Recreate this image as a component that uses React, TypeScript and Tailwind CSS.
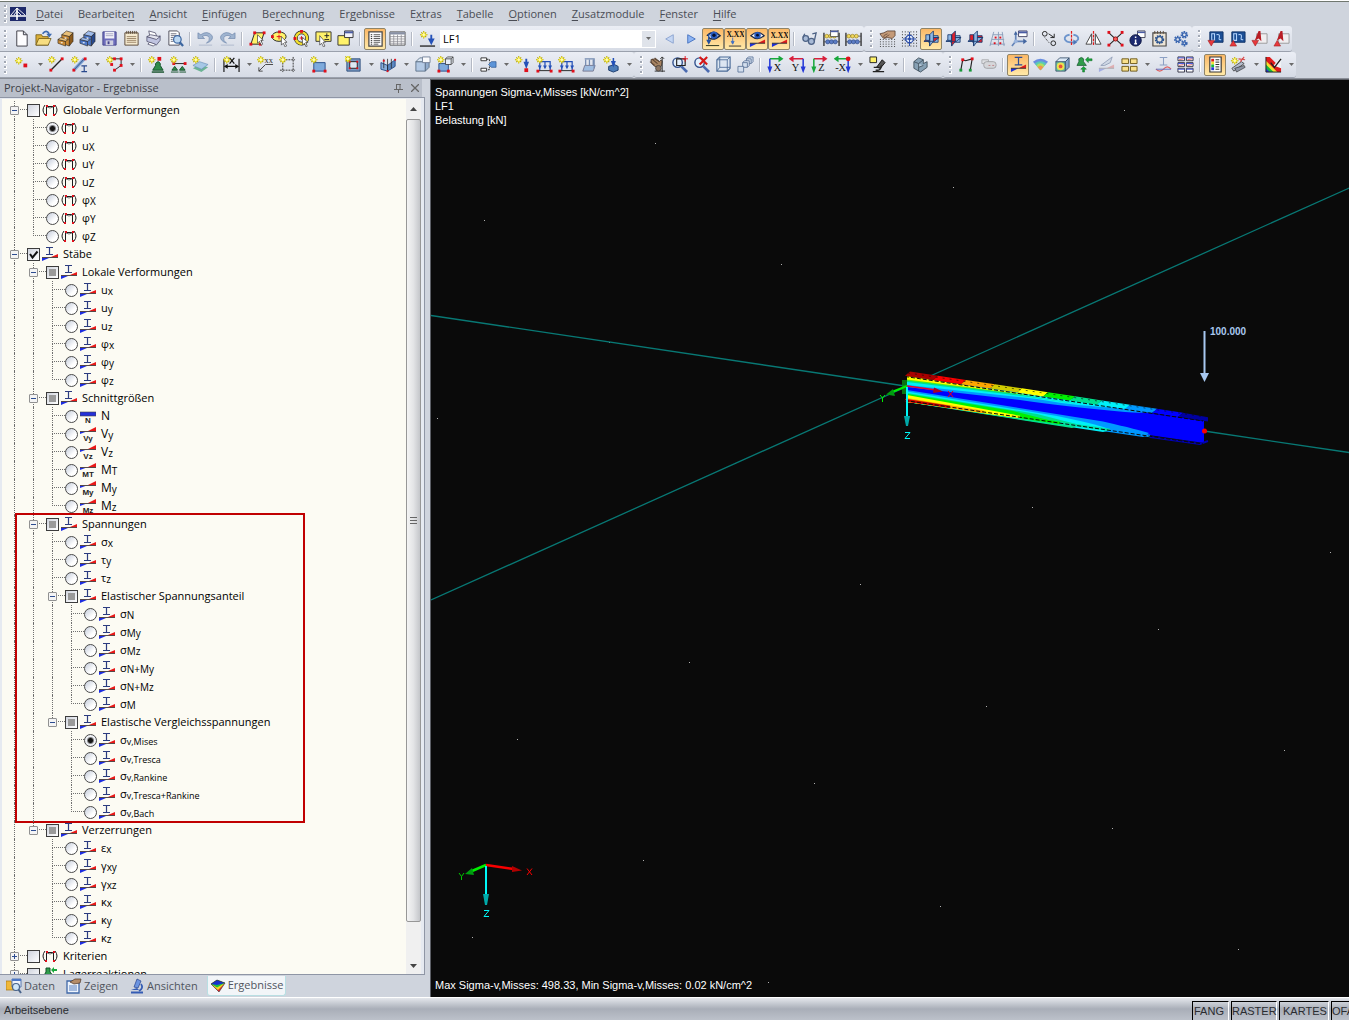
import { useId, type ReactNode } from 'react'

interface ToolItem {
  id: string
  title: string
  active?: boolean
  split?: boolean
}

type ToolEntry = ToolItem | 'sep' | 'combo'

interface TreeNode {
  label: string
  sub?: string
  icon: string
  kind: 'check' | 'radio'
  state?: 'on' | 'mixed'
  group?: string
  big?: boolean
  collapsed?: boolean
  marked?: boolean
  children?: TreeNode[]
}

function Spark({ x = 4, y = 4 }: { x?: number; y?: number }) {
  return (
    <g transform={`translate(${x} ${y})`}>
      <path d="M0 -4V4M-4 0H4M-2.6 -2.6L2.6 2.6M2.6 -2.6L-2.6 2.6" stroke="#b9a800" strokeWidth="1.1" />
      <path d="M0 -3V3M-3 0H3" stroke="#f6ea20" strokeWidth="1.6" />
      <circle r="1.5" fill="#fffbb0" />
    </g>
  )
}

function Dot({ x, y, s = 3, c = '#e0101c' }: { x: number; y: number; s?: number; c?: string }) {
  return <rect x={x - s / 2} y={y - s / 2} width={s} height={s} fill={c} />
}

function Eye() {
  return (
    <g>
      <path d="M2 6Q9 -1 16 6Q9 12 2 6Z" fill="#fff" stroke="#1c2a4a" strokeWidth="1.3" />
      <circle cx="9" cy="5.5" r="3.4" fill="#2a5cc0" />
      <circle cx="9" cy="5.5" r="1.5" fill="#061030" />
    </g>
  )
}

function Wedge({ y = 14 }: { y?: number }) {
  return (
    <g>
      <path d={`M1 ${y}H9L1 ${y + 4}Z`} fill="#1c2fd8" />
      <path d={`M17 ${y}H9L17 ${y - 4}Z`} fill="#e01c1c" />
      <path d={`M1 ${y}H17`} stroke="#333" />
    </g>
  )
}

function Cabinet({ front, side, top }: { front: string; side: string; top: string }) {
  return (
    <g stroke="#26221c" strokeWidth=".6">
      <path d="M5 5L10 1L17 3L13 7Z" fill={top} />
      <path d="M13 7L17 3V12L13 17Z" fill={side} />
      <path d="M5 5L13 7V17L5 14Z" fill={front} />
      <path d="M1 10L9 12V17L1 14Z" fill={front} />
      <path d="M1 10L4 8L12 10L9 12Z" fill={top} />
      <path d="M8 8.500h2M4 13.500h2" stroke="#fff" strokeWidth="1.3" />
    </g>
  )
}

function Magnifier({ cross }: { cross?: boolean }) {
  return (
    <g>
      <circle cx="7" cy="7" r="5" fill="#e4f0fc" stroke="#33518c" strokeWidth="1.5" />
      <path d="M11 11L17 17" stroke="#4a6ab0" strokeWidth="2.8" />
      {cross ? (
        <path d="M7 1L15 9M15 1L7 9" stroke="#d81818" strokeWidth="2.200" />
      ) : (
        <g>
          <path d="M6 3H15V10H6Z" stroke="#222" strokeWidth="1.200" />
          <path d="M15 0V6M12 3H18" stroke="#e0101c" />
        </g>
      )}
    </g>
  )
}

function Axis({ letter, color, down, left }: { letter: string; color: string; down: string; left?: boolean }) {
  return (
    <g>
      {left ? (
        <path d="M15 3H4M4 1L1 3L4 5Z" stroke={color} strokeWidth="1.6" fill={color} />
      ) : (
        <path d="M3 3H13M13 1L16 3L13 5Z" stroke={color} strokeWidth="1.6" fill={color} />
      )}
      {left ? (
        <path d="M15 3V12M13.500 12H16.500L15 16Z" stroke={down} strokeWidth="1.6" fill={down} />
      ) : (
        <path d="M3 3V12M1.500 12H4.500L3 16Z" stroke={down} strokeWidth="1.6" fill={down} />
      )}
      <text x={left ? 7 : 11} y="16" textAnchor="middle" fontSize="11" fontFamily="Liberation Serif" fill="#111">
        {letter}
      </text>
    </g>
  )
}

function WorkPlane({ a, b, c }: { a: string; b: string; c: string }) {
  return (
    <g stroke="#1c3c70" strokeWidth=".9">
      <path d="M6 6H16V13H6Z" fill={c} />
      <path d="M1 12L6 8H17L12 12Z" fill={a} />
      <path d="M7 5L11 1V12L7 17Z" fill={b} />
      <path d="M3 5H7V11H3Z" fill={c} />
      <path d="M1 12H12M7 5V17M11 8H17" />
    </g>
  )
}

function Abacus({ y = 0 }: { y?: number }) {
  return (
    <g transform={`translate(0 ${y})`}>
      <path d="M1 3V17M17 3V17" stroke="#111" strokeWidth="1.2" />
      <path d="M1 6.500H17M1 12.500H17" stroke="#444" strokeWidth=".8" />
      {[4, 8, 12].map((x) => (
        <circle key={x} cx={x} cy="6.500" r="2" fill="#f0d860" stroke="#8c7414" strokeWidth=".6" />
      ))}
      {[5, 9, 13].map((x) => (
        <circle key={x} cx={x} cy="12.500" r="2.200" fill="#5c7cc4" stroke="#24407c" strokeWidth=".6" />
      ))}
    </g>
  )
}

function Load() {
  return (
    <g>
      <path d="M4 15V6H15V15M9.500 6V12" stroke="#2451b8" strokeWidth="1.3" />
      <path d="M2 10h4l-2 4ZM7.500 10h4l-2 4ZM13 10h4l-2 4Z" fill="#2451b8" />
      <path d="M1 15.500H17" stroke="#222" />
      <Dot x={2} y={16} />
      <Dot x={16} y={16} />
    </g>
  )
}

function Cube({ fill = '#a9c4e4' }: { fill?: string }) {
  return (
    <g stroke="#38506c" strokeWidth=".9">
      <path d="M2 6H12V16H2Z" fill={fill} />
      <path d="M2 6L6 2H16L12 6Z" fill="#dbe8f6" />
      <path d="M12 6L16 2V12L12 16Z" fill="#7f9fc6" />
    </g>
  )
}

function Gear({ x, y, r, c = '#3a66b0' }: { x: number; y: number; r: number; c?: string }) {
  return (
    <g>
      <circle cx={x} cy={y} r={r} stroke={c} strokeWidth="2" strokeDasharray="1.6 1" />
      <circle cx={x} cy={y} r={r - 1} stroke={c} strokeWidth="1.4" />
    </g>
  )
}

function Picture() {
  return (
    <g>
      <path d="M3 2H17V13H3Z" fill="#1c4f96" stroke="#123468" />
      <path d="M5 4H8V11H5ZM10 5Q14 4 13 8Q12 11 15 10" stroke="#b8d8ff" strokeWidth="1.1" />
    </g>
  )
}

function Pdf() {
  return (
    <g>
      <path d="M6 4H17V14H6Z" fill="#f0eef0" stroke="#999" />
      <path d="M4 11L8 1H10L11 12L8 9Z" fill="#b81c24" />
    </g>
  )
}

const I_BEAM = 'M5 1.500H13M5 9.500H13M9 1.500V9.500'

const icons: Record<string, ReactNode> = {
  new: <path d="M4 1H11L15 5V17H4ZM11 1V5H15" fill="#fdfdff" stroke="#3c3c44" />,
  open: (
    <g stroke="#6a5410" strokeWidth=".8">
      <path d="M1 5H7L8 7H14V16H1Z" fill="#d9ae38" />
      <path d="M1 16L4 9H17L14 16Z" fill="#f7dd80" />
      <path d="M8 4Q12 -1 15 4" stroke="#3c6ab0" strokeWidth="1.8" />
      <path d="M12 4H18L15 8Z" fill="#3c6ab0" stroke="none" />
    </g>
  ),
  cabinetBrown: <Cabinet front="#c98a35" side="#8c5a1c" top="#e8bf78" />,
  cabinetBlue: <Cabinet front="#4d78c8" side="#28498c" top="#9fbcec" />,
  save: (
    <g>
      <path d="M2 2H16V16H2Z" fill="#6e6ebc" stroke="#44448c" />
      <path d="M4 2H14V9H4Z" fill="#f1f1f8" />
      <path d="M5 4H13M5 6H13" stroke="#a8a8c4" />
      <path d="M5 11H13V16H5Z" fill="#cfd0e0" />
      <path d="M7 12H9V15H7Z" fill="#44448c" />
    </g>
  ),
  notebook: (
    <g>
      <path d="M2 3H16V16H2Z" fill="#f5ead0" stroke="#5c4a38" />
      <path d="M4 7H14M4 9H14M4 11H14M4 13H14" stroke="#9c8668" />
      <path d="M4 1V4M6 1V4M8 1V4M10 1V4M12 1V4M14 1V4" stroke="#5c4a38" />
    </g>
  ),
  print: (
    <g stroke="#4c4c68" strokeWidth=".8">
      <path d="M4 1L11 3L13 8L5 6Z" fill="#fff" />
      <path d="M2 7L12 9L16 6V11L12 16L2 12Z" fill="#c0c4e0" />
      <path d="M2 7L6 5L16 7L12 10Z" fill="#e6e7f0" />
      <path d="M5 13L11 15L9 17L3 15Z" fill="#fff" />
    </g>
  ),
  preview: (
    <g>
      <path d="M2 1H11L13 3V16H2Z" fill="#fff" stroke="#50505a" />
      <path d="M4 4H10M4 6H10M4 8H7M4 10H6M4 12H7" stroke="#70707c" />
      <circle cx="11" cy="10" r="4" fill="#bcd8f2" stroke="#3c66a0" strokeWidth="1.3" />
      <path d="M13.500 13L17 17" stroke="#3c66a0" strokeWidth="2.4" />
    </g>
  ),
  undo: (
    <g>
      <path d="M1 3V9H8L5.500 7Q10 4 13 8Q14 11 10 14Q18 11 16 6Q11 0 4 5Z" fill="#9fb4d0" stroke="#6d86aa" strokeWidth=".7" />
      <path d="M2 16H16" stroke="#aebbce" />
    </g>
  ),
  redo: (
    <g>
      <path d="M17 3V9H10L12.500 7Q8 4 5 8Q4 11 8 14Q0 11 2 6Q7 0 14 5Z" fill="#9fb4d0" stroke="#6d86aa" strokeWidth=".7" />
      <path d="M2 16H16" stroke="#aebbce" />
    </g>
  ),
  selPoly: (
    <g>
      <path d="M6 3H16L12 15H2Z" fill="#fff26a" stroke="#222" />
      <Dot x={6} y={3} /><Dot x={16} y={3} /><Dot x={2} y={15} /><Dot x={12} y={15} />
      <path d="M9 5V14L11 12L13 16L14.500 15L12.500 11H15Z" fill="#fff" stroke="#333" strokeWidth=".7" />
    </g>
  ),
  selEllipse: (
    <g>
      <ellipse cx="8.500" cy="7" rx="7.500" ry="5" fill="#fff26a" stroke="#222" />
      <Dot x={9} y={2} /><Dot x={1.5} y={7} /><path d="M6 7H11M8.500 5V10" stroke="#e0101c" />
      <path d="M11 7V16L13 14L15 18L16.500 17L14.500 13H17Z" fill="#fff" stroke="#333" strokeWidth=".7" />
    </g>
  ),
  selRing: (
    <g>
      <circle cx="9" cy="8.500" r="6" stroke="#222" strokeWidth="4" />
      <circle cx="9" cy="8.500" r="6" stroke="#f4e030" strokeWidth="2.6" />
      <path d="M7 8.500H11M9 6.500V10.500" stroke="#e0101c" />
      <Dot x={9} y={1.5} /><Dot x={2} y={9} />
      <path d="M10 8V16L12 14L14 18L15 17L13.500 13H16Z" fill="#fff" stroke="#333" strokeWidth=".7" />
    </g>
  ),
  selPlus: (
    <g>
      <path d="M1 2H17V12H1Z" fill="#fff26a" stroke="#333" />
      <path d="M10 6H15M12.500 3.500V8.500M10 10H15" stroke="#222" />
      <path d="M5 6V16L7 14L9 18L10.500 17L8.500 13H11Z" fill="#fff" stroke="#333" strokeWidth=".7" />
    </g>
  ),
  selWindow: (
    <g>
      <path d="M1 6H13V16H1Z" fill="#fff26a" stroke="#333" />
      <path d="M8 1H17V8H8Z" fill="#f4f4fa" stroke="#333" />
      <path d="M8 2.500H17" stroke="#4a5ca4" strokeWidth="2" />
    </g>
  ),
  navigator: (
    <g>
      <path d="M2 2H16V17H2Z" fill="#fff" stroke="#444" strokeWidth="1.3" />
      <path d="M7 5H14M7 7H14M7 9H14M7 11H14M7 13H14M7 15H12" stroke="#555" />
      <path d="M4 5H5.500M4 7H5.500M4 9H5.500M4 11H5.500M4 13H5.500M4 15H5.500" stroke="#222" />
    </g>
  ),
  table: (
    <g>
      <path d="M1 2H17V16H1Z" fill="#fff" stroke="#555" />
      <path d="M1 3.500H17" stroke="#8890a4" strokeWidth="2.5" />
      <path d="M1 7H17M1 9.500H17M1 12H17M1 14H17M5 5V16M9 5V16M13 5V16" stroke="#8a8a92" strokeWidth=".8" />
    </g>
  ),
  newCase: (
    <g>
      <Spark x={5} y={5} />
      <path d="M1 17H17" stroke="#222" strokeWidth="1.4" />
      <path d="M13 5V11M11 10L13 14L15 10Z" stroke="#2451b8" strokeWidth="2" fill="#2451b8" />
    </g>
  ),
  prev: <path d="M13 5V14L5 9.500Z" fill="#c4d6f4" stroke="#8ca4d0" />,
  next: <path d="M5 5V14L13 9.500Z" fill="#8cb4f4" stroke="#4874c0" />,
  eyeLoad: (
    <g>
      <path d="M2 6Q9 -1 16 6Q9 12 4 8" fill="#fff" stroke="#1c2a4a" strokeWidth="1.6" />
      <circle cx="9.500" cy="5.500" r="3.800" fill="#2a5cc0" />
      <circle cx="9.500" cy="5.500" r="1.800" fill="#061030" />
      <path d="M4 4V12M2.500 11L4 14L5.500 11Z" stroke="#24509c" fill="#24509c" strokeWidth="1.5" />
      <path d="M1 16.500H15" stroke="#24301c" />
    </g>
  ),
  valLoad: (
    <g>
      <text x="9" y="7" textAnchor="middle" fontSize="8" fontFamily="Liberation Serif" fontWeight="bold" fill="#111">
        X.XX
      </text>
      <path d="M6 8V13M4.500 12L6 15L7.500 12Z" stroke="#4472c4" fill="#4472c4" />
      <path d="M2 17H15" stroke="#333" />
    </g>
  ),
  eyeResult: <g><Eye /><Wedge /></g>,
  valResult: (
    <g>
      <text x="9" y="8" textAnchor="middle" fontSize="8" fontFamily="Liberation Serif" fontWeight="bold" fill="#111">
        X.XX
      </text>
      <Wedge />
    </g>
  ),
  glasses: (
    <g fill="#a8bad6" stroke="#4e6386" strokeWidth="1.4">
      <circle cx="5" cy="9" r="3" /><circle cx="11" cy="12" r="3.200" />
      <path d="M2 8L4 4M14 12L16 3L12 4M7.500 10.500L8 11" fill="none" />
    </g>
  ),
  calcWin: (
    <g>
      <Abacus />
      <path d="M8 0H16V7H8Z" fill="#fff" stroke="#333" strokeWidth=".8" /><path d="M8 1.500H16" stroke="#4a5ca4" strokeWidth="1.6" />
    </g>
  ),
  calc: <Abacus />,
  snapHand: (
    <g>
      <path d="M1 10H17M1 12.500H17M1 15H17M1 17.500H17" stroke="#333" strokeDasharray="1 2" />
      <path d="M1 4L5 3L9 1H17V6L14 9L9 8L5 9L3 7Z" fill="#c49a78" stroke="#50382a" strokeWidth=".8" />
      <path d="M5 6L9 4M7 7.500L11 5M4 7L7 8" stroke="#50382a" strokeWidth=".7" />
    </g>
  ),
  grid: (
    <g>
      <path d="M1 2H17M1 5H17M1 8H17M1 11H17M1 14H17M1 17H17" stroke="#222" strokeDasharray="1 2" />
      <circle cx="9" cy="9.500" r="4" fill="#e4ecfa" stroke="#2448a8" strokeWidth="1.2" />
      <path d="M9 2V17M2 9.500H16" stroke="#2448a8" />
      <circle cx="9" cy="9.500" r="1.500" fill="#2448a8" />
    </g>
  ),
  planeXY: <WorkPlane a="#e0202c" b="#8fb8e4" c="#8fb8e4" />,
  planeYZ: <WorkPlane a="#8fb8e4" b="#e0202c" c="#8fb8e4" />,
  planeXZ: <WorkPlane a="#8fb8e4" b="#8fb8e4" c="#e0202c" />,
  guide: (
    <g>
      <path d="M5 2L1 17M10 2V17M14 2L16 17M4 5H15M3 10H16M1 15H17" stroke="#8ca0bc" />
      <Dot x={7} y={8} s={2} /><Dot x={12} y={8} s={2} /><Dot x={6} y={14} s={2} /><Dot x={12} y={14} s={2} />
    </g>
  ),
  coordWin: (
    <g>
      <path d="M5 3V12H14M5 12L1 17" stroke="#6484b8" strokeWidth="1.8" />
      <path d="M8 1H17V7H8Z" fill="#fff" stroke="#446" /><path d="M8 2.500H17" stroke="#4a5ca4" strokeWidth="2" />
      <circle cx="5" cy="12" r="2" fill="#9ab4dc" /><path d="M13 9l4 3l-4 3Z" fill="#4466a0" />
      <path d="M3 5H7L5 1Z" fill="#4466a0" />
    </g>
  ),
  move: (
    <g stroke="#222">
      <circle cx="4" cy="4" r="2.500" /><circle cx="13" cy="14" r="2.500" />
      <path d="M8 4L14 8M14 4V8H10" />
      <path d="M4 8L9 14" strokeDasharray="1 1" />
    </g>
  ),
  rotate: (
    <g>
      <path d="M7 5Q1 6 2 10Q4 14 12 13M11 5Q17 6 16 10Q15 12 13 12" stroke="#6c94cc" strokeWidth="2" />
      <path d="M11 10V16L15 13Z" fill="#4a76b8" />
      <path d="M9 1V17" stroke="#e01c1c" strokeWidth="1.3" strokeDasharray="3 1" />
    </g>
  ),
  mirror: (
    <g fill="#fff" stroke="#444">
      <path d="M1 15L7 4V15ZM17 15L11 4V15Z" />
      <path d="M9 1V17" stroke="#e01c1c" strokeWidth="1.3" strokeDasharray="3 1" />
    </g>
  ),
  scale: (
    <g>
      <path d="M2 3L16 16M16 3L2 16" stroke="#222" strokeWidth="1.1" />
      <Dot x={2} y={2.5} /><Dot x={16} y={2.5} /><Dot x={2} y={16} /><Dot x={16} y={16} />
      <circle cx="9" cy="9.500" r="2.200" fill="#f46060" stroke="#a01010" />
    </g>
  ),
  info: (
    <g>
      <path d="M9 1H17V8H9Z" fill="#fff" stroke="#445" /><path d="M9 2.500H17" stroke="#4a5ca4" strokeWidth="1.6" />
      <circle cx="7" cy="11" r="6" fill="#1c2a70" stroke="#0c1440" />
      <path d="M7 10V14.500M5.500 14.500H8.500M7 7V8.500" stroke="#fff" strokeWidth="1.600" />
    </g>
  ),
  settings: (
    <g>
      <path d="M2 3H16V17H2Z" fill="#efe6d6" stroke="#444" strokeWidth="1.200" /><path d="M4 1V4M7 1V4M10 1V4M13 1V4" stroke="#5c4a38" />
      <Gear x={9} y={10} r={4} c="#2c5490" />
    </g>
  ),
  gears: <g><Gear x={5} y={10} r={3} /><Gear x={12} y={5} r={3} /><Gear x={12} y={14} r={2.500} /></g>,
  dxfIn: <g><Picture /><path d="M1 11H8L4.500 17Z" fill="#e8383c" stroke="#a01c1c" strokeWidth=".6" /></g>,
  dxfOut: <g><Picture /><path d="M1 17H8L4.500 11Z" fill="#e8383c" stroke="#a01c1c" strokeWidth=".6" /></g>,
  cadIn: <g><Pdf /><path d="M1 11H8L4.500 17Z" fill="#e8383c" stroke="#a01c1c" strokeWidth=".6" /></g>,
  cadOut: <g><Pdf /><path d="M1 17H8L4.500 11Z" fill="#e8383c" stroke="#a01c1c" strokeWidth=".6" /></g>,
  node: <g><Spark x={5} y={5} /><Dot x={12} y={10} s={4} /></g>,
  line: <g><path d="M3 15L15 3" stroke="#222" strokeWidth="1.4" /><Dot x={3} y={15} /><Dot x={15} y={3} /><Spark /></g>,
  member: (
    <g>
      <path d="M3 15L14 3" stroke="#7ea4d8" strokeWidth="3.500" /><path d="M3 15L14 3" stroke="#223c70" strokeWidth=".8" />
      <Dot x={3} y={15} /><Dot x={15} y={3} />
      <path d="M11 10.500H17M11 16.500H17M14 10.500V16.500" stroke="#28488c" strokeWidth="1.200" /><Spark />
    </g>
  ),
  polyline: (
    <g>
      <path d="M6 3H16V10L9 15" stroke="#222" />
      <Dot x={9} y={3} /><Dot x={16} y={3} /><Dot x={16} y={10} /><Dot x={9} y={15} /><Dot x={6} y={9} /><Spark />
    </g>
  ),
  support: (
    <g>
      <path d="M8 8Q11 4 13 8L13 10L16 15H5L8 10Z" fill="#2f8c4a" stroke="#14502a" /><path d="M4 17H17" stroke="#14502a" strokeWidth="1.500" />
      <Dot x={12} y={3} s={4} /><Spark />
    </g>
  ),
  lineSupport: (
    <g>
      <path d="M4 8H16" stroke="#222" /><Dot x={4} y={8} /><Dot x={16} y={8} />
      <path d="M2 15L5 11L8 15ZM10 15L13 11L16 15Z" fill="#2f8c4a" stroke="#14502a" /><path d="M1 17H9M10 17H17" stroke="#14502a" /><Spark />
    </g>
  ),
  surfSupport: (
    <g>
      <path d="M1 13L8 9L17 12L10 17Z" fill="#6cb494" /><path d="M1 10L8 6L17 9L10 14Z" fill="#a6c8e6" stroke="#6890b8" strokeWidth=".7" /><Spark />
    </g>
  ),
  dimension: (
    <g>
      <path d="M1 3V17M17 3V17M2 11H16" stroke="#111" strokeWidth="1.2" /><path d="M1 11L5 8.500V13.500ZM17 11L13 8.500V13.500Z" fill="#111" />
      <path d="M7 2L12 8M12 2L7 8" stroke="#111" strokeWidth="1.300" /><Spark x={4} />
    </g>
  ),
  comment: (
    <g>
      <path d="M2 16L9 9H17M2 16V12M2 16H6" stroke="#444" />
      <text x="8" y="7" fontSize="6" fontFamily="Liberation Serif" fill="#111">XX</text>
      <Spark />
    </g>
  ),
  frameGrid: <g><path d="M4 1V17M15 1V17M1 4H17M1 15H17" stroke="#333" strokeDasharray="2 1" /><Spark /></g>,
  surface: <g><path d="M4 7H16V16H4Z" fill="#7eaadc" stroke="#28508c" /><Dot x={4} y={16} /><Dot x={16} y={16} /><Spark /></g>,
  opening: (
    <g>
      <path d="M2 3H16V16H2Z" fill="#7c9cc4" stroke="#2c4c7c" /><path d="M5 6H13V13H5Z" fill="#dfe8f4" stroke="#222" />
      <Dot x={5} y={6} s={2} /><Dot x={13} y={6} s={2} /><Dot x={5} y={13} s={2} /><Dot x={13} y={13} s={2} />
      <Spark x={3} y={3} />
    </g>
  ),
  intersect: (
    <g>
      <path d="M1 7L8 10V16L1 14Z" fill="#8ab0dc" stroke="#28508c" /><path d="M8 10L16 4V11L8 16Z" fill="#5c88c0" stroke="#28508c" />
      <path d="M4 3V13M8 3V17M12 3V13" stroke="#222" strokeWidth=".8" /><Dot x={4} y={5} s={2} /><Dot x={16} y={4} s={2} /><Dot x={8} y={16} s={2} />
    </g>
  ),
  solid: <g opacity=".8"><Cube /><path d="M9 1H17V7H9Z" fill="#fff" stroke="#5c6c88" /></g>,
  solidNew: (
    <g>
      <path d="M2 8H12V16H2Z" fill="#7eaadc" stroke="#28508c" /><path d="M9 3L11 1H17V7L15 9H9ZM9 3H15V9M15 3L17 1" fill="#e8eff8" stroke="#333" strokeWidth=".8" />
      <Dot x={2} y={16} /><Dot x={12} y={16} /><Spark />
    </g>
  ),
  hinge: (
    <g>
      <path d="M1 2H7V5H1ZM1 13H7V16H1Z" fill="#fff" stroke="#333" /><path d="M7 3.500H10V7M10 11V14.500H7" stroke="#333" strokeDasharray="2 1" />
      <path d="M12 6H17V12H12L9 9Z" fill="#5c94d8" stroke="#28508c" strokeWidth=".7" />
    </g>
  ),
  loadNode: <g><path d="M13 3V8M11.500 7L13 11L14.500 7Z" stroke="#2451b8" strokeWidth="2" fill="#2451b8" /><Dot x={13} y={15} s={4} /><Spark x={5} /></g>,
  loadLine: <g><Load /><Spark /></g>,
  loadMember: <g><Load /><Spark /></g>,
  loadSurf: (
    <g opacity=".65">
      <path d="M3 16L5 10H16L14 16Z" fill="#7eaadc" stroke="#446" />
      <path d="M6 4V10M10 4V10M14 4V10M5 3H15V13" stroke="#3a5c90" strokeWidth="1.300" />
    </g>
  ),
  loadFree: (
    <g>
      <path d="M6 11L12 9L16 11V15L11 17L6 15Z" fill="#4c7cb8" stroke="#1c3c6c" /><path d="M11 2V7M9.500 6L11 10L12.500 6Z" fill="#2451b8" stroke="#2451b8" strokeWidth="1.600" /><Spark />
    </g>
  ),
  pan: (
    <g>
      <path d="M2 4L6 3L11 6L13 4L14 6L13 11L9 12L6 11L3 8Z" fill="#a88462" stroke="#3c2c20" strokeWidth=".8" />
      <path d="M1 6L6 10M3 3L9 8M6 2L11 6" stroke="#5c4432" strokeWidth="1.1" />
      <path d="M14 1V17M6 16H17M12 3L14 1L16 3" stroke="#333" /><circle cx="10" cy="13" r="3" fill="#8c7460" stroke="#333" strokeWidth=".7" />
    </g>
  ),
  zoomWin: <Magnifier />,
  zoomReset: <Magnifier cross />,
  cube: (
    <g stroke="#4c6c98" strokeWidth="1.200">
      <path d="M2 4L5 1H16V13L13 16H2Z" fill="#dce6f2" /><path d="M2 4H13L16 1M13 4V16M5 1V12H16M2 16L5 12" strokeWidth=".9" />
    </g>
  ),
  cubes: (
    <g fill="#d4dfee" stroke="#5c7498" strokeWidth=".9">
      <path d="M10 3L12 1H17V6L15 8H10ZM10 3H15V8" /><path d="M6 7L8 5H13V10L11 12H6ZM6 7H11V12" /><path d="M1 11H7V17H1Z" />
    </g>
  ),
  viewX: <Axis letter="X" color="#18a83c" down="#2438d8" />,
  viewY: <Axis letter="Y" color="#d8203c" down="#2438d8" left />,
  viewZ: <Axis letter="Z" color="#d8203c" down="#18a83c" />,
  viewMX: <g><Axis letter="-X" color="#18a83c" down="#2438d8" left /><circle cx="15" cy="3" r="2.500" fill="#e0101c" /></g>,
  display: (
    <g>
      <path d="M8 12L14 4L17 7L12 13Z" fill="#555" stroke="#111" /><path d="M1 1H8V7H1Z" fill="#fff26a" stroke="#222" />
      <path d="M4 16.500H16M5 12H11M7 15Q13 16 13 10" stroke="#222" strokeWidth="1.500" />
    </g>
  ),
  clip: (
    <g stroke="#3c4c58" strokeWidth=".9">
      <path d="M2 6L7 2L12 4V8L16 6V12L9 17L2 13Z" fill="#86a0b4" /><path d="M2 6L7 8V12L12 10M7 12V16M7 8L12 4" fill="#b8ccdc" />
    </g>
  ),
  frame: (
    <g>
      <path d="M3 15L5 4L8 5L15 3L13 15" stroke="#222" strokeWidth="1.200" /><Dot x={5} y={4} /><Dot x={15} y={3} />
      <Dot x={3} y={15} c="#189838" /><Dot x={13} y={15} c="#189838" />
    </g>
  ),
  tube: (
    <g opacity=".6">
      <path d="M2 4H9V8H2Z" fill="#ddd" stroke="#888" /><rect x="4" y="6" width="13" height="7" rx="3" fill="#cfcfcf" stroke="#777" />
      <path d="M9 10H11M13 10H15" stroke="#a44" />
    </g>
  ),
  memberRes: <g><path d={I_BEAM} stroke="#2c4c98" strokeWidth="1.300" /><Wedge y={13} /></g>,
  surfaceRes: (
    <g opacity=".9">
      <path d="M1 6Q9 0 17 6L9 15Z" fill="#5c84e0" />
      <path d="M3 8Q9 3 15 8L9 15Z" fill="#4cc8b0" />
      <path d="M4.500 10Q9 5.500 13.500 10L9 15Z" fill="#a8e050" />
      <path d="M6 12Q9 8 12 12L9 15Z" fill="#f48c3c" />
    </g>
  ),
  solidRes: (
    <g>
      <Cube fill="#6cc8a0" /><circle cx="7" cy="11" r="4" fill="#f0e050" /><circle cx="7" cy="11" r="2" fill="#e8503c" />
    </g>
  ),
  supportRes: (
    <g>
      <path d="M3 3Q6 0 8 3V6L11 10H1L3 6Z" fill="#2f9c4a" stroke="#14502a" strokeWidth=".7" />
      <path d="M10 4L13 1V3H17V5H13V7ZM7 17V14H5L8 11L11 14H9V17Z" fill="#18a83c" stroke="#0c6020" strokeWidth=".5" />
    </g>
  ),
  sections: (
    <g opacity=".6">
      <path d="M3 10L15 1L13 7L7 10Z" fill="#c4d0e0" stroke="#66789a" /><path d="M1 13H9L1 17Z" fill="#7c8ce0" /><path d="M17 13H9L17 9Z" fill="#e08c8c" />
      <path d="M1 13H17" stroke="#888" />
    </g>
  ),
  blocks: <path d="M1 3H8V8H1ZM10 3H17V8H10ZM1 11H8V16H1ZM10 11H17V16H10Z" fill="#f8e08c" stroke="#6c5818" />,
  curve: (
    <g>
      <path d={I_BEAM} stroke="#8ca0c4" strokeWidth="1.100" /><path d="M1 14Q5 18 9 14Q13 9 17 14" stroke="#e06060" strokeWidth="1.200" /><path d="M1 14H17" stroke="#6070c0" />
    </g>
  ),
  tiles: (
    <g>
      <path d="M1 1H8V5H1ZM10 1H17V5H10ZM1 7H8V11H1ZM10 7H17V11H10ZM1 13H8V17H1ZM10 13H17V17H10Z" fill="#fff" stroke="#334" />
      <path d="M1 2H8M10 2H17M1 8H8M10 8H17M1 14H8M10 14H17" stroke="#3c50d8" />
      <path d="M2 4L7 3M11 4L16 3M2 10L7 9M11 10L16 9" stroke="#d83c3c" strokeWidth=".7" />
    </g>
  ),
  panel: (
    <g>
      <path d="M3 1H15V17H3Z" fill="#fff" stroke="#333" strokeWidth="1.200" /><path d="M6 3V6" stroke="#e01c1c" strokeWidth="3" /><path d="M6 6V9" stroke="#f0e030" strokeWidth="3" />
      <path d="M6 9V12" stroke="#18b840" strokeWidth="3" /><path d="M6 12V15" stroke="#2438d8" strokeWidth="3" />
      <path d="M9 4H13M9 6.500H13M9 9H13M9 11.500H13M9 14H13" stroke="#222" />
    </g>
  ),
  filter: (
    <g>
      <path d="M2 13L12 6L15 8L4 16Z" fill="#b4bccc" stroke="#333" strokeWidth=".8" /><path d="M5 13L15 10L16 12L7 17Z" fill="#8c94a4" stroke="#333" strokeWidth=".7" />
      <path d="M9 3L16 4M15 1L11 6" stroke="#d84848" strokeWidth="1.200" /><Spark x={5} y={5} />
    </g>
  ),
  colors: (
    <g>
      <path d="M1 1H5L17 13V17H1Z" fill="#e01c1c" /><path d="M1 5L13 17H1Z" fill="#f4e030" /><path d="M1 9L9 17H1Z" fill="#18b840" /><path d="M1 13L5 17H1Z" fill="#2438d8" />
      <path d="M9 10L16 2L17 1V13Z" fill="#f0f2f6" />
      <path d="M1 1V17H17" stroke="#222" /><path d="M6 7L10 12L17 3" stroke="#222" strokeWidth="1.400" />
    </g>
  ),
}

const standardTools: ToolEntry[] = [
  { id: 'new', title: 'Neu' },
  { id: 'open', title: 'Öffnen' },
  { id: 'cabinetBrown', title: 'Archiv öffnen' },
  { id: 'cabinetBlue', title: 'Projekt-Manager' },
  { id: 'save', title: 'Speichern' },
  { id: 'notebook', title: 'Basisangaben' },
  { id: 'print', title: 'Drucken' },
  { id: 'preview', title: 'Ausdruckprotokoll' },
  'sep',
  { id: 'undo', title: 'Rückgängig' },
  { id: 'redo', title: 'Wiederherstellen' },
  'sep',
  { id: 'selPoly', title: 'Selektion Rhomboid' },
  { id: 'selEllipse', title: 'Selektion Ellipse' },
  { id: 'selRing', title: 'Selektion Kreisring' },
  { id: 'selPlus', title: 'Selektion hinzufügen' },
  { id: 'selWindow', title: 'Selektion speziell' },
  'sep',
  { id: 'navigator', title: 'Navigator', active: true },
  { id: 'table', title: 'Tabellen' },
  'sep',
  { id: 'newCase', title: 'Neuer Lastfall' },
  'combo',
  { id: 'prev', title: 'Vorheriger Lastfall' },
  { id: 'next', title: 'Nächster Lastfall' },
  { id: 'eyeLoad', title: 'Lasten anzeigen', active: true },
  { id: 'valLoad', title: 'Lastwerte anzeigen', active: true },
  { id: 'eyeResult', title: 'Ergebnisse anzeigen', active: true },
  { id: 'valResult', title: 'Ergebniswerte anzeigen', active: true },
  'sep',
  { id: 'glasses', title: 'Sichtbarkeit' },
  { id: 'calcWin', title: 'Berechnungsparameter' },
  { id: 'calc', title: 'Alles berechnen' },
]

const planeTools: ToolEntry[] = [
  { id: 'snapHand', title: 'Fang' },
  { id: 'grid', title: 'Raster' },
  { id: 'planeXY', title: 'Ebene XY', active: true },
  { id: 'planeYZ', title: 'Ebene YZ' },
  { id: 'planeXZ', title: 'Ebene XZ' },
  { id: 'guide', title: 'Hilfslinien' },
  { id: 'coordWin', title: 'Koordinatensystem' },
  'sep',
  { id: 'move', title: 'Verschieben' },
  { id: 'rotate', title: 'Rotieren' },
  { id: 'mirror', title: 'Spiegeln' },
  { id: 'scale', title: 'Skalieren' },
  { id: 'info', title: 'Info' },
  { id: 'settings', title: 'Einstellungen' },
  { id: 'gears', title: 'Optionen' },
]

const exportTools: ToolEntry[] = [
  { id: 'dxfIn', title: 'Import' },
  { id: 'dxfOut', title: 'Export' },
  { id: 'cadIn', title: 'CAD Import' },
  { id: 'cadOut', title: 'CAD Export' },
]

const insertTools: ToolEntry[] = [
  { id: 'node', title: 'Knoten', split: true },
  { id: 'line', title: 'Linie' },
  { id: 'member', title: 'Stab', split: true },
  { id: 'polyline', title: 'Polylinie', split: true },
  'sep',
  { id: 'support', title: 'Knotenlager' },
  { id: 'lineSupport', title: 'Linienlager' },
  { id: 'surfSupport', title: 'Flächenlager' },
  'sep',
  { id: 'dimension', title: 'Bemaßung', split: true },
  { id: 'comment', title: 'Kommentar' },
  { id: 'frameGrid', title: 'Linienraster' },
  'sep',
  { id: 'surface', title: 'Fläche', split: true },
  { id: 'opening', title: 'Öffnung', split: true },
  { id: 'intersect', title: 'Durchdringung', split: true },
  { id: 'solid', title: 'Volumenkörper' },
  { id: 'solidNew', title: 'Neuer Volumenkörper', split: true },
  'sep',
  { id: 'hinge', title: 'Gelenk', split: true },
  { id: 'loadNode', title: 'Knotenlast' },
  { id: 'loadLine', title: 'Stablast' },
  { id: 'loadMember', title: 'Linienlast' },
  { id: 'loadSurf', title: 'Flächenlast' },
  { id: 'loadFree', title: 'Freie Last', split: true },
]

const viewTools: ToolEntry[] = [
  { id: 'pan', title: 'Bewegen' },
  { id: 'zoomWin', title: 'Zoom' },
  { id: 'zoomReset', title: 'Alles zeigen' },
  { id: 'cube', title: 'Isometrie' },
  { id: 'cubes', title: 'Perspektive' },
  'sep',
  { id: 'viewX', title: 'Ansicht X' },
  { id: 'viewY', title: 'Ansicht Y' },
  { id: 'viewZ', title: 'Ansicht Z' },
  { id: 'viewMX', title: 'Ansicht -X', split: true },
  { id: 'display', title: 'Anzeige', split: true },
  'sep',
  { id: 'clip', title: 'Clippingebene', split: true },
]

const resultTools: ToolEntry[] = [
  { id: 'frame', title: 'Verformungen' },
  { id: 'tube', title: 'Querschnitte' },
  'sep',
  { id: 'memberRes', title: 'Stäbe', active: true },
  { id: 'surfaceRes', title: 'Flächen' },
  { id: 'solidRes', title: 'Volumenkörper Ergebnisse' },
  { id: 'supportRes', title: 'Lagerreaktionen anzeigen' },
  { id: 'sections', title: 'Schnitte' },
  { id: 'blocks', title: 'Werte', split: true },
  { id: 'curve', title: 'Ergebnisverlauf' },
  { id: 'tiles', title: 'Mehrere Fenster' },
  'sep',
  { id: 'panel', title: 'Panel', active: true },
  { id: 'filter', title: 'Filter', split: true },
  { id: 'colors', title: 'Farbskala', split: true },
]

// [text, index of the underlined access key]
const menus: [string, number][] = [
  ['Datei', 0],
  ['Bearbeiten', 9],
  ['Ansicht', 0],
  ['Einfügen', 0],
  ['Berechnung', 2],
  ['Ergebnisse', 2],
  ['Extras', 1],
  ['Tabelle', 0],
  ['Optionen', 0],
  ['Zusatzmodule', 0],
  ['Fenster', 0],
  ['Hilfe', 0],
]

const radio = (label: string, sub: string | undefined, icon: string, group: string, extra?: Partial<TreeNode>): TreeNode => ({
  label,
  sub,
  icon,
  group,
  kind: 'radio',
  ...extra,
})

const tree: TreeNode[] = [
  {
    label: 'Globale Verformungen',
    icon: 'portal',
    kind: 'check',
    children: [
      radio('u', undefined, 'portal', 'global', { state: 'on' }),
      radio('u', 'X', 'portal', 'global'),
      radio('u', 'Y', 'portal', 'global'),
      radio('u', 'Z', 'portal', 'global'),
      radio('φ', 'X', 'portal', 'global'),
      radio('φ', 'Y', 'portal', 'global'),
      radio('φ', 'Z', 'portal', 'global'),
    ],
  },
  {
    label: 'Stäbe',
    icon: 'beam',
    kind: 'check',
    state: 'on',
    children: [
      {
        label: 'Lokale Verformungen',
        icon: 'beam',
        kind: 'check',
        state: 'mixed',
        children: [
          radio('u', 'x', 'beam', 'member'),
          radio('u', 'y', 'beam', 'member'),
          radio('u', 'z', 'beam', 'member'),
          radio('φ', 'x', 'beam', 'member'),
          radio('φ', 'y', 'beam', 'member'),
          radio('φ', 'z', 'beam', 'member'),
        ],
      },
      {
        label: 'Schnittgrößen',
        icon: 'beam',
        kind: 'check',
        state: 'mixed',
        children: [
          radio('N', undefined, 'N', 'member', { big: true }),
          radio('V', 'y', 'Vy', 'member', { big: true }),
          radio('V', 'z', 'Vz', 'member', { big: true }),
          radio('M', 'T', 'MT', 'member', { big: true }),
          radio('M', 'y', 'My', 'member', { big: true }),
          radio('M', 'z', 'Mz', 'member', { big: true }),
        ],
      },
      {
        label: 'Spannungen',
        icon: 'beam',
        kind: 'check',
        state: 'mixed',
        marked: true,
        children: [
          radio('σ', 'x', 'beam', 'member'),
          radio('τ', 'y', 'beam', 'member'),
          radio('τ', 'z', 'beam', 'member'),
          {
            label: 'Elastischer Spannungsanteil',
            icon: 'beam',
            kind: 'check',
            state: 'mixed',
            children: [
              radio('σ', 'N', 'beam', 'member'),
              radio('σ', 'My', 'beam', 'member'),
              radio('σ', 'Mz', 'beam', 'member'),
              radio('σ', 'N+My', 'beam', 'member'),
              radio('σ', 'N+Mz', 'beam', 'member'),
              radio('σ', 'M', 'beam', 'member'),
            ],
          },
          {
            label: 'Elastische Vergleichsspannungen',
            icon: 'beam',
            kind: 'check',
            state: 'mixed',
            children: [
              radio('σ', 'v,Mises', 'beam', 'member', { state: 'on' }),
              radio('σ', 'v,Tresca', 'beam', 'member'),
              radio('σ', 'v,Rankine', 'beam', 'member'),
              radio('σ', 'v,Tresca+Rankine', 'beam', 'member'),
              radio('σ', 'v,Bach', 'beam', 'member'),
            ],
          },
        ],
      },
      {
        label: 'Verzerrungen',
        icon: 'beam',
        kind: 'check',
        state: 'mixed',
        children: [
          radio('ε', 'x', 'beam', 'member'),
          radio('γ', 'xy', 'beam', 'member'),
          radio('γ', 'xz', 'beam', 'member'),
          radio('κ', 'x', 'beam', 'member'),
          radio('κ', 'y', 'beam', 'member'),
          radio('κ', 'z', 'beam', 'member'),
        ],
      },
    ],
  },
  { label: 'Kriterien', icon: 'portal', kind: 'check', collapsed: true },
  { label: 'Lagerreaktionen', icon: 'reaction', kind: 'check', collapsed: true },
]

function TreeIcon({ name }: { name: string }) {
  if (name === 'portal') {
    return (
      <svg width="16" height="16" viewBox="0 0 16 16" fill="none" className="shrink-0">
        <path d="M3 3Q-1 8 3 13M13 3Q17 8 13 13M4.500 13V4.500H11.500V13" stroke="#1c1c1c" />
        <path d="M5 5Q8 7 11 5" stroke="#777" />
        <Dot x={5} y={4} s={2} /><Dot x={12} y={4} s={2} /><Dot x={4} y={13} s={2} /><Dot x={12} y={13} s={2} />
      </svg>
    )
  }
  if (name === 'beam') {
    return (
      <svg width="16" height="16" viewBox="0 0 16 16" fill="none" className="shrink-0">
        <path d="M4 1.500H11M4 8.500H11M7.500 1.500V8.500" stroke="#2c3c80" strokeWidth="1.200" />
        <path d="M0 12H7L0 15Z" fill="#1c2ce0" />
        <path d="M16 8V11H9Z" fill="#e81818" />
        <path d="M0 11.500H16" stroke="#554848" />
      </svg>
    )
  }
  if (name === 'reaction') {
    return (
      <svg width="16" height="16" viewBox="0 0 16 16" fill="none" className="shrink-0">
        <path d="M4 2H8L8 6L12 11H1L4 6Z" fill="#2f9c4a" stroke="#14502a" />
        <path d="M9 4L12 1V3H15V5H12V7Z" fill="#18a83c" />
      </svg>
    )
  }
  return (
    <svg width="16" height="18" viewBox="0 0 16 18" fill="none" className="shrink-0">
      {name === 'N' ? (
        <path d="M0 5H16V9H0Z" fill="#2430d8" stroke="#444" strokeWidth=".6" />
      ) : (
        <g>
          <path d="M0 6H8L0 9Z" fill="#1c2ce0" />
          <path d="M16 2V6H8Z" fill="#e81818" />
          <path d="M0 6.500H16" stroke="#554848" />
        </g>
      )}
      <text x="8" y="16" textAnchor="middle" fontSize="8" fontWeight="bold" fontFamily="Liberation Sans" fill="#222">
        {name}
      </text>
    </svg>
  )
}

function TreeRow({ node, guides, last }: { node: TreeNode; guides: boolean[]; last: boolean }) {
  const id = useId()
  const open = !!node.children
  return (
    <li className="relative">
      <div className="flex h-[18px] items-center pl-[3px]">
        {guides.map((on, i) => (
          <span key={i} className="h-full w-[19px] shrink-0 pl-[9px]">
            {on && <span className="block h-full w-px border-l border-dotted border-[#707070]" />}
          </span>
        ))}
        <span className="relative h-full w-[22px] shrink-0 pl-[9px]">
          <span className="block h-[9px] border-b border-l border-dotted border-[#707070]" />
          {!last && <span className="block h-[9px] w-px border-l border-dotted border-[#707070]" />}
          {(open || node.collapsed) && (
            <button
              aria-label={open ? 'Zuklappen' : 'Aufklappen'}
              className="absolute left-[5px] top-[5px] flex size-[9px] items-center justify-center rounded-[1px] border border-[#919191] bg-[#f4f4f4]"
            >
              <svg width="5" height="5" viewBox="0 0 5 5">
                <path d={open ? 'M0 2.500H5' : 'M0 2.500H5M2.500 0V5'} stroke="#2c4c90" />
              </svg>
            </button>
          )}
        </span>
        {node.kind === 'radio' ? (
          <input
            id={id}
            type="radio"
            name={node.group}
            defaultChecked={node.state === 'on'}
            className="size-[13px] shrink-0 appearance-none rounded-full border border-[#4a4a4a] bg-[linear-gradient(135deg,#c3cbda,#fff_65%)] checked:bg-[radial-gradient(circle,#151515_0_2px,#eef0f5_4px)]"
          />
        ) : (
          <span className="relative size-[13px] shrink-0">
            <input
              id={id}
              type="checkbox"
              defaultChecked={node.state === 'on'}
              className="peer block size-[13px] appearance-none border border-[#3c3c3c] bg-linear-to-br from-[#d0d4de] to-white"
            />
            {node.state === 'mixed' && (
              <span className="pointer-events-none absolute left-[3px] top-[3px] size-[7px] bg-[#9a9a9a]" />
            )}
            <svg viewBox="0 0 13 13" className="pointer-events-none absolute inset-0 hidden size-[13px] peer-checked:block">
              <path d="M3 6L5.500 9.500L10.500 3.500" fill="none" stroke="#111" strokeWidth="2" />
            </svg>
          </span>
        )}
        <span className="ml-[2px] flex h-full w-[21px] shrink-0 items-center">
          <TreeIcon name={node.icon} />
        </span>
        <label htmlFor={id} className={`whitespace-nowrap leading-[18px] ${node.big ? 'text-[12px]' : 'text-[11px]'}`}>
          {node.label}
          {node.sub && (
            <span className={`relative top-px ${node.sub.length > 4 ? 'text-[9px]' : 'text-[10px]'}`}>{node.sub}</span>
          )}
        </label>
      </div>
      {node.children && <TreeList nodes={node.children} guides={[...guides, !last]} />}
      {node.marked && (
        <span className="pointer-events-none absolute -bottom-0.5 -top-0.5 left-[13px] w-[290px] border-2 border-[#c00000]" />
      )}
    </li>
  )
}

function TreeList({ nodes, guides }: { nodes: TreeNode[]; guides: boolean[] }) {
  return (
    <ul>
      {nodes.map((n, i) => (
        <TreeRow key={n.label + (n.sub ?? '')} node={n} guides={guides} last={i === nodes.length - 1} />
      ))}
    </ul>
  )
}

function Caret() {
  return (
    <svg width="5" height="3" viewBox="0 0 5 3">
      <path d="M0 0H5L2.500 3Z" fill="#6a6a6a" />
    </svg>
  )
}

function Grip() {
  return (
    <span className="flex w-[10px] shrink-0 flex-col items-center justify-center gap-[2px]">
      {[0, 1, 2, 3].map((i) => (
        <span key={i} className="size-[3px] border-b border-r border-white bg-[#a3a9b5]" />
      ))}
    </span>
  )
}

function ToolGroup({ items, inner }: { items: ToolEntry[]; inner?: boolean }) {
  return (
    <div
      className={`flex h-[26px] shrink-0 items-center rounded-r-[3px] border-b border-[#9ba1ad] bg-linear-to-b from-[#ebeef5] to-[#d6dbe5] ${inner ? 'rounded-l-[3px] pl-[2px]' : ''}`}
    >
      <Grip />
      {items.map((it, i) => {
        if (it === 'sep') {
          return (
            <span key={i} className="flex w-2 shrink-0 justify-center">
              <span className="h-[14px] w-[2px] border-r border-white bg-[#b4b9c4]" />
            </span>
          )
        }
        if (it === 'combo') {
          return (
            <span key={i} className="relative mx-[2px] h-[18px] w-[216px] shrink-0">
              <select
                aria-label="Lastfall"
                className="block h-[18px] w-full appearance-none bg-white pl-[3px] text-[11px] leading-[18px] text-black"
              >
                <option>LF1</option>
              </select>
              <span className="pointer-events-none absolute inset-y-px right-px flex w-[13px] items-center justify-center bg-[#dfe3ea]">
                <Caret />
              </span>
            </span>
          )
        }
        return (
          <span key={i} className="flex shrink-0 items-center">
            <button
              title={it.title}
              aria-label={it.title}
              className={`flex h-[22px] items-center justify-center ${it.split ? 'w-[25px]' : 'w-[22px]'} ${
                it.active ? 'rounded-[2px] border border-[#8f8468] bg-linear-to-b from-[#fbb865] to-[#ffe9a8]' : ''
              }`}
            >
              <svg width="17" height="17" viewBox="0 0 18 18" fill="none" className="shrink-0">
                {icons[it.id]}
              </svg>
            </button>
            {it.split && (
              <button aria-label={`${it.title} Auswahl`} className="flex h-[22px] w-[10px] items-center justify-center">
                <Caret />
              </button>
            )}
          </span>
        )
      })}
    </div>
  )
}

function MenuBar() {
  return (
    <nav className="flex h-[24px] items-center">
      <Grip />
      <svg width="16" height="14" viewBox="0 0 16 14" className="mr-[10px]">
        <path d="M0 0H16V14H0Z" fill="#1f2a6b" />
        <path d="M0 9H16M7 1V13" stroke="#fff" strokeWidth="1.600" />
        <path d="M7 1L1 8M7 4L4 8M7 1L15 8M7 4L11 8" stroke="#fff" strokeWidth=".9" fill="none" />
      </svg>
      <div className="flex gap-[15px] text-[11px] text-[#4a4d55]">
        {menus.map(([text, key]) => (
          <button key={text} className="whitespace-nowrap">
            {text.slice(0, key)}
            <span className="underline underline-offset-2 [text-decoration-skip-ink:none]">{text[key]}</span>
            {text.slice(key + 1)}
          </button>
        ))}
      </div>
    </nav>
  )
}

function NavigatorTabs() {
  const tabs: { label: string; icon: ReactNode; active?: boolean }[] = [
    {
      label: 'Daten',
      icon: (
        <g>
          <path d="M0 3H5L6 5H11V12H0Z" fill="#f0b838" stroke="#a87410" strokeWidth=".7" />
          <path d="M6 1H15V9H6Z" fill="#eef2fa" stroke="#5878b0" /><path d="M6 2H15" stroke="#4c78c8" strokeWidth="2" />
          <circle cx="10" cy="9" r="3.500" fill="#cfe6f8" stroke="#48648c" strokeWidth="1.200" /><path d="M12.500 11.500L15 15" stroke="#48648c" strokeWidth="2" />
        </g>
      ),
    },
    {
      label: 'Zeigen',
      icon: (
        <g>
          <path d="M1 3H13V15H1Z" fill="#eef4fc" stroke="#4068a8" strokeWidth="1.300" /><path d="M3 8H11M3 10H11M3 12H11" stroke="#5880c0" />
          <path d="M4 4L9 1H15L14 5L8 6Z" fill="#b48c68" stroke="#4c3424" strokeWidth=".7" />
        </g>
      ),
    },
    {
      label: 'Ansichten',
      icon: (
        <g>
          <path d="M8 1L12 3L9 10L5 9Z" fill="#6c94e0" stroke="#24408c" strokeWidth=".7" /><path d="M12 6Q15 10 10 13" fill="none" stroke="#345cb4" strokeWidth="1.800" />
          <path d="M2 14.500H14" stroke="#345cb4" strokeWidth="2" /><path d="M2 12L8 10L10 12Z" fill="#345cb4" />
        </g>
      ),
    },
    {
      label: 'Ergebnisse',
      active: true,
      icon: (
        <g>
          <path d="M1 6L7 2L15 5L9 14Z" fill="#e02828" /><path d="M1 6L7 2L15 5L8 12Z" fill="#f4dc20" /><path d="M1 6L7 2L15 5L7 9.500Z" fill="#20c040" /><path d="M1 6L7 2L15 5L7 7Z" fill="#1830d0" />
          <path d="M1 6L7 2L15 5L9 14Z" fill="none" stroke="#333" strokeWidth=".6" />
        </g>
      ),
    },
  ]
  return (
    <div role="tablist" className="flex h-[22px] items-start gap-[7px] pl-[4px] pt-px text-[11px] text-[#50545e]">
      {tabs.map((t) => (
        <button
          key={t.label}
          role="tab"
          aria-selected={!!t.active}
          className={`flex h-[20px] items-center gap-[2px] px-[2px] ${t.active ? 'rounded-b-[3px] border-x border-b border-[#b9dfe3] bg-[#f2f5f8]' : ''}`}
        >
          <svg width="16" height="16" viewBox="0 0 16 16" fill="none">
            {t.icon}
          </svg>
          {t.label}
        </button>
      ))}
    </div>
  )
}

function Navigator() {
  return (
    <aside className="flex w-[430px] shrink-0 flex-col">
      <div className="mr-[8px] flex h-[18px] items-center bg-[#b9bfca] pl-1 pr-[3px] text-[11px] text-[#3e4148]">
        <h2 className="flex-1">Projekt-Navigator - Ergebnisse</h2>
        <button aria-label="Anheften" className="mr-2">
          <svg width="9" height="9" viewBox="0 0 9 9" fill="none" stroke="#666">
            <path d="M2.500 0V5M6 0V5M2 .5H7M0 5.500H9M4.500 5.500V9" />
          </svg>
        </button>
        <button aria-label="Schließen">
          <svg width="8" height="8" viewBox="0 0 8 8" stroke="#666" strokeWidth="1.300">
            <path d="M0 0L8 8M8 0L0 8" />
          </svg>
        </button>
      </div>
      <div className="mr-[5px] flex min-h-0 flex-1 border border-l-0 border-[#8f96a5] bg-[#e6eaf1] pl-[2px] pr-[3px] pt-px">
        <div className="min-w-0 flex-1 overflow-hidden bg-[#fcfbf3] pt-[2px]">
          <TreeList nodes={tree} guides={[]} />
        </div>
        <div className="flex w-[15px] shrink-0 flex-col bg-[#f0f0f0]">
          <button aria-label="Nach oben" className="flex h-[20px] items-center justify-center">
            <svg width="7" height="4" viewBox="0 0 7 4"><path d="M0 4L3.500 0L7 4Z" fill="#444" /></svg>
          </button>
          <div className="flex flex-1 items-center justify-center rounded-[2px] border border-[#979797] bg-linear-to-r from-[#f4f4f4] via-[#e3e4e6] to-[#c4c6ca]">
            <svg width="7" height="8" viewBox="0 0 7 8"><path d="M0 .5H7M0 3.500H7M0 6.500H7" stroke="#666" /></svg>
          </div>
          <div className="h-[35px]" />
          <button aria-label="Nach unten" className="flex h-[17px] items-center justify-center">
            <svg width="7" height="4" viewBox="0 0 7 4"><path d="M0 0L3.500 4L7 0Z" fill="#444" /></svg>
          </button>
        </div>
      </div>
      <NavigatorTabs />
    </aside>
  )
}

const flange: [string, number, number][] = [
  ['#a80000', 905, 933],
  ['#f80000', 933, 961],
  ['#ffa500', 961, 990],
  ['#d0cc00', 990, 1017],
  ['#ffff00', 1017, 1043],
  ['#00f000', 1043, 1070],
  ['#00e08c', 1070, 1097],
  ['#00f0f8', 1097, 1125],
  ['#0098ff', 1125, 1152],
  ['#0000ff', 1152, 1178],
  ['#0000a0', 1178, 1208],
]

const edgeY = (x: number) => 371 + (x - 907) * 0.151

const gridPoints = [
  [655, 143], [1124, 110], [953, 187], [484, 220], [781, 264], [437, 418], [1032, 507], [1330, 552],
  [1158, 629], [860, 584], [689, 662], [986, 706], [517, 739], [1284, 750], [814, 783], [1112, 828],
  [643, 860], [940, 906], [1238, 949], [472, 937], [768, 982], [609, 342], [735, 463],
]

function Scene() {
  return (
    <svg className="absolute inset-0 h-full w-full" fill="none">
      <g transform="translate(-431 -80)">
        {gridPoints.map(([x, y]) => (
          <rect key={`${x}-${y}`} x={x} y={y} width="1" height="1" fill="#b0b0b0" />
        ))}
        <path d="M431 315.500L905 386M1204 431L2000 549M431 600L2000 -104" stroke="#087874" strokeWidth="1.300" />

        {/* web of the I-beam with stress bands */}
        <path d="M907 377L1204 421V443L907 400Z" fill="#0000ff" />
        <path d="M907 377L1157 410Q1150 414 1125 412Q1060 406 1020 400L907 387Z" fill="#0098ff" />
        <path d="M907 377L1125 408Q1080 407 1037 399L907 385Z" fill="#00f0f8" />
        <path d="M907 377L1085 405L1030 397L907 382Z" fill="#00e08c" />
        <path d="M907 377L1050 398L907 380.500Z" fill="#60f000" />
        <path d="M907 376L1030 395L907 379.500Z" fill="#ffff00" />
        <path d="M907 390L1103 421.500Q1140 430 1149 433L1143 437L907 402Z" fill="#0098ff" />
        <path d="M907 391.500L1057 416Q1105 426 1111 430L1103 432L907 402Z" fill="#00f0f8" />
        <path d="M907 393L1037 414L1080 425L1072 428L907 402Z" fill="#00e08c" />
        <path d="M907 394L1013 411L1052 421L907 402Z" fill="#00f000" />
        <path d="M907 395L1016 415L1010 417L907 402Z" fill="#ffff00" />
        <path d="M907 398L984 411L907 402Z" fill="#ffa500" />
        <path d="M907 400L940 406L907 402Z" fill="#f80000" />

        {/* top flange */}
        {flange.map(([color, a, b]) => (
          <path
            key={color}
            d={`M${a} ${edgeY(a) + 5}L${a + 5} ${edgeY(a + 5)}L${b + 5 > 1208 ? 1208 : b + 5} ${edgeY(b + 5)}L${b} ${edgeY(b) + 5}Z`}
            fill={color}
          />
        ))}
        <path d="M905 376.500L1203 421" stroke="#0a0a0a" strokeDasharray="4 2" />
        <path d="M908 373L1206 417" stroke="#0a0a0a" strokeDasharray="2 5" strokeOpacity=".6" />

        {/* bottom flange */}
        <path d="M905 400L950 407" stroke="#c80000" strokeWidth="2.500" />
        <path d="M950 407L984 412" stroke="#ffa500" strokeWidth="2.500" />
        <path d="M984 412L1020 417" stroke="#ffff00" strokeWidth="2.500" />
        <path d="M1020 417L1060 423" stroke="#00f000" strokeWidth="2.500" />
        <path d="M1060 423L1110 430" stroke="#00e0a8" strokeWidth="2.500" />
        <path d="M1110 430L1150 436" stroke="#0098ff" strokeWidth="2.500" />
        <path d="M1150 437L1200 444L1208 441" stroke="#0000b0" strokeWidth="2" />
        <path d="M905 400.500L1203 444" stroke="#0a0a0a" strokeDasharray="4 2" />

        <circle cx="1204.500" cy="431" r="2.500" fill="#f80000" />

        {/* member axes at the support */}
        <path d="M902 380H907V394H902Z" fill="#0a8c14" fillOpacity=".8" />
        <path d="M907 386L936 390" stroke="#e8002c" strokeWidth="1.500" />
        <path d="M934 387.500L943 391.500L933 393Z" fill="#a80020" />
        <path d="M948 391L953 397M953 391L948 397" stroke="#f80000" />
        <path d="M907 386L892 392" stroke="#00f000" strokeWidth="2" />
        <path d="M893 389L886 394.500L895 396Z" fill="#009c10" />
        <path d="M880 395L882.500 398L885 395M882.500 398V402" stroke="#00f000" />
        <path d="M907 387V418" stroke="#00f8f8" strokeWidth="2" />
        <path d="M904 416H910L908 426H906Z" fill="#00a8a8" />
        <path d="M905 432.500H910L905 438.500H910" stroke="#00f8f8" />

        {/* load arrow */}
        <path d="M1204.500 331V374" stroke="#a8c8f0" strokeWidth="2" />
        <path d="M1200 373H1209L1204.500 382Z" fill="#a8c8f0" />
        <text x="1210" y="335" fontSize="10" fontWeight="bold" fontFamily="Liberation Sans" fill="#a8c8f0">
          100.000
        </text>

        {/* global axes */}
        <path d="M486 865L472 871" stroke="#00f000" strokeWidth="2.500" />
        <path d="M472 868L465 874L474 875Z" fill="#009c10" />
        <path d="M486 865L514 869" stroke="#f80000" strokeWidth="2.500" />
        <path d="M512 866L522 870.500L512 872Z" fill="#b00000" />
        <path d="M486 866V896" stroke="#00f8f8" strokeWidth="2" />
        <path d="M483 894H489L487 905H485Z" fill="#00a8a8" />
        <path d="M527 868.500L532 875M532 868.500L527 875" stroke="#f80000" />
        <path d="M459 873L461.500 876.500L464 873M461.500 876.500V880" stroke="#00c800" />
        <path d="M484 910.500H489L484 916.500H489" stroke="#00f8f8" />
      </g>
    </svg>
  )
}

export default function App() {
  return (
    <div className="flex h-screen flex-col overflow-hidden bg-[#cfd4dd] font-['Open_Sans','Noto_Sans',sans-serif] text-black">
      <header className="shrink-0 border-b border-[#8b8f98]">
        <div className="h-[2px] border-b border-[#70776f] bg-white" />
        <MenuBar />
        <div className="flex">
          <ToolGroup items={standardTools} />
          <ToolGroup items={planeTools} inner />
          <ToolGroup items={exportTools} inner />
        </div>
        <div className="flex">
          <ToolGroup items={insertTools} />
          <ToolGroup items={viewTools} inner />
          <ToolGroup items={resultTools} inner />
        </div>
      </header>

      <div className="flex min-h-0 flex-1">
        <Navigator />
        <main className="relative min-w-0 flex-1 overflow-hidden border-l border-t border-[#5c5f66] bg-[#0a0a0a] font-['Liberation_Sans',sans-serif] text-[11px] leading-[14px] text-white">
          <Scene />
          <div className="relative flex h-full flex-col justify-between pb-[5px] pl-1 pt-[5px]">
            <div>
              <p>Spannungen Sigma-v,Misses [kN/cm^2]</p>
              <p>LF1</p>
              <p>Belastung [kN]</p>
            </div>
            <p>Max Sigma-v,Misses: 498.33, Min Sigma-v,Misses: 0.02 kN/cm^2</p>
          </div>
        </main>
      </div>

      <footer className="flex h-[23px] shrink-0 items-stretch border-t border-white bg-linear-to-b from-[#e4e7ec] via-[#a9aeb8] to-[#bcc1ca] pt-[3px] font-['Liberation_Sans',sans-serif] text-[11px] leading-[18px] text-[#2a2c30]">
        <span className="flex-1 pl-1">Arbeitsebene</span>
        <div className="flex gap-[2px]">
          <span className="w-[37px] border-l border-r border-t border-black border-r-white pl-px">FANG</span>
          <span className="w-[46px] border-l border-r border-t border-black border-r-white">RASTER</span>
          <span className="w-[50px] border-l border-r border-t border-black border-r-white pl-[3px]">KARTES</span>
          <span className="w-[18px] overflow-hidden border-l border-t border-black">OFANG</span>
        </div>
      </footer>
    </div>
  )
}
